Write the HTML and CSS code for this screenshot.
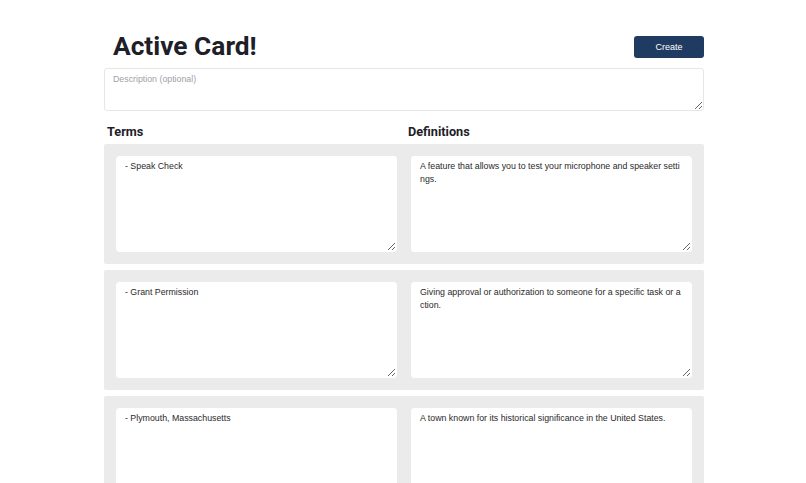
FILE: index.html
```html
<!DOCTYPE html>
<html lang="en">
<head>
<meta charset="utf-8">
<title>Active Card!</title>
<link rel="stylesheet" href="styles.css">
</head>
<body>
<main class="page">
  <header class="top">
    <h1 class="title">Active Card!</h1>
    <button class="create" type="button">Create</button>
  </header>
  <textarea class="desc" placeholder="Description (optional)"></textarea>
  <div class="heads">
    <h2 class="head">Terms</h2>
    <h2 class="head">Definitions</h2>
  </div>
  <section class="rows">
    <div class="row">
      <textarea class="field">- Speak Check</textarea>
      <textarea class="field">A feature that allows you to test your microphone and speaker settings.</textarea>
    </div>
    <div class="row">
      <textarea class="field">- Grant Permission</textarea>
      <textarea class="field">Giving approval or authorization to someone for a specific task or action.</textarea>
    </div>
    <div class="row">
      <textarea class="field">- Plymouth, Massachusetts</textarea>
      <textarea class="field">A town known for its historical significance in the United States.</textarea>
    </div>
  </section>
</main>
</body>
</html>
```

FILE: styles.css
```css
html, body {
  margin: 0;
  padding: 0;
  background: #ffffff;
}

body {
  padding-left: 2px;
  font-family: "Liberation Sans", Arial, sans-serif;
  color: #2b2b2b;
}

.page {
  width: 600px;
  margin: 0 auto;
  padding-top: 31px;
  display: flex;
  flex-direction: column;
}

.top {
  display: flex;
  align-items: center;
  justify-content: space-between;
  height: 31px;
}

.title {
  margin: 0;
  padding-left: 9px;
  font-family: Roboto, "Liberation Sans", sans-serif;
  font-weight: 700;
  font-size: 26.3px;
  line-height: 31px;
  color: #1d2027;
}

.create {
  width: 70px;
  height: 22px;
  border: none;
  border-radius: 3px;
  background: #203b62;
  color: #ffffff;
  font-family: "Liberation Sans", Arial, sans-serif;
  font-size: 9px;
  padding: 0;
}

.desc {
  display: block;
  box-sizing: border-box;
  width: 600px;
  height: 43px;
  margin-top: 6px;
  padding: 4px 8px;
  border: 1px solid #e6e6e6;
  border-radius: 3px;
  font-family: "Liberation Sans", Arial, sans-serif;
  font-size: 8.8px;
  line-height: 13px;
  color: #2b2b2b;
  background: #ffffff;
}

.desc::placeholder {
  color: #a0a0a8;
}

.heads {
  display: grid;
  grid-template-columns: 1fr 1fr;
  column-gap: 2px;
  margin-top: 13px;
}

.head {
  margin: 0;
  padding-left: 3px;
  font-family: Roboto, "Liberation Sans", sans-serif;
  font-weight: 700;
  font-size: 12.7px;
  line-height: 15px;
  color: #1d2027;
}

.rows {
  display: flex;
  flex-direction: column;
  gap: 6px;
  margin-top: 5px;
}

.row {
  display: grid;
  grid-template-columns: 281px 281px;
  column-gap: 14px;
  padding: 12px;
  background: #ebebeb;
  border-radius: 2px;
}

.field {
  display: block;
  box-sizing: border-box;
  width: 281px;
  height: 96px;
  margin: 0;
  padding: 3px 8px;
  border: 1px solid #ffffff;
  border-radius: 3px;
  background: #ffffff;
  font-family: "Liberation Sans", Arial, sans-serif;
  font-size: 8.8px;
  line-height: 13px;
  color: #2a2a2a;
  word-break: break-all;
  overflow: hidden;
}
```
